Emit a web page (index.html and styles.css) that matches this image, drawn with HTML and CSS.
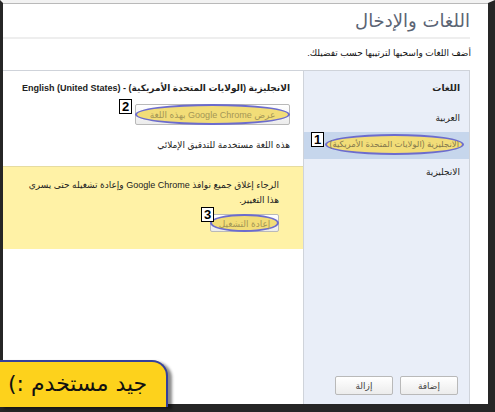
FILE: index.html
```html
<!DOCTYPE html>
<html lang="ar">
<head>
<meta charset="utf-8">
<title>اللغات والإدخال</title>
<link rel="stylesheet" href="styles.css">
</head>
<body>
<div class="frame">
  <div class="page" dir="rtl">
    <header class="head"><h1>اللغات والإدخال</h1></header>
    <p class="intro">أضف اللغات واسحبها لترتيبها حسب تفضيلك.</p>
    <div class="box">
      <aside class="langs">
        <div class="langs-title">اللغات</div>
        <ul class="lang-list">
          <li>العربية</li>
          <li class="sel"><span class="oval">الانجليزية (الولايات المتحدة الأمريكية)</span><span class="badge b1">1</span></li>
          <li>الانجليزية</li>
        </ul>
        <div class="langs-actions">
          <button class="btn">إضافة</button>
          <button class="btn">إزالة</button>
        </div>
      </aside>
      <section class="detail">
        <div class="detail-title">الانجليزية (الولايات المتحدة الأمريكية) - English (United States)</div>
        <div class="row">
          <span class="btn-wrap">
            <button class="btn btn-ui"><span class="oval oval-btn">عرض Google Chrome بهذه اللغة</span></button>
            <span class="badge b2">2</span>
          </span>
        </div>
        <p class="spell">هذه اللغة مستخدمة للتدقيق الإملائي</p>
        <div class="notice">
          <p class="notice-text">الرجاء إغلاق جميع نوافذ Google Chrome وإعادة تشغيله حتى يسري<br>هذا التغيير.</p>
          <div class="row">
            <span class="btn-wrap">
              <button class="btn btn-restart"><span class="oval oval-btn">إعادة التشغيل</span></button>
              <span class="badge b3">3</span>
            </span>
          </div>
        </div>
      </section>
    </div>
  </div>
  <div class="tab" dir="ltr"><span>(:</span> <span dir="rtl">مستخدم</span> <span dir="rtl">جيد</span></div>
</div>
</body>
</html>
```

FILE: styles.css
```css
html, body {
  margin: 0;
  padding: 0;
  background: #ffffff;
}

.frame {
  position: relative;
  width: 495px;
  height: 412px;
  box-sizing: border-box;
  border-left: 3px solid #262626;
  border-right: 7px solid #262626;
  border-bottom: 8px solid #262626;
  border-top: 3px solid #f2f2f2;
  background: #ffffff;
  font-family: "Liberation Sans", "DejaVu Sans", sans-serif;
  font-size: 10px;
  color: #222;
}

.page {
  height: 100%;
  box-sizing: border-box;
  border-top: 1px solid #b9b9b9;
  display: flex;
  flex-direction: column;
}

.head {
  margin-right: 18px;
  height: 33px;
  border-bottom: 2px solid #eeeeee;
}

.head h1 {
  margin: 0;
  font-weight: normal;
  font-size: 18px;
  line-height: 33px;
  color: #5b6474;
  font-family: "DejaVu Sans", sans-serif;
}

.intro {
  margin: 7px 17px 10px 0;
  font-size: 9px;
  line-height: 14px;
  color: #111;
}

.box {
  flex: 1;
  min-height: 0;
  margin-right: 18px;
  border-top: 1px solid #cfd3da;
  display: flex;
}

.langs {
  flex: 0 0 167px;
  box-sizing: border-box;
  background: #e9eef8;
  border-left: 1px solid #cfd3da;
  border-right: 1px solid #cfd3da;
  display: flex;
  flex-direction: column;
}

.langs-title {
  font-weight: bold;
  font-size: 9px;
  line-height: 14px;
  padding: 10px 9px 0 0;
  height: 24px;
}

.lang-list {
  list-style: none;
  margin: 0;
  padding: 0;
  flex: 1;
}

.lang-list li {
  position: relative;
  height: 27px;
  line-height: 27px;
  padding-right: 9px;
  font-size: 9px;
  white-space: nowrap;
}

.lang-list li.sel {
  background: #c6d6ec;
  padding-right: 5px;
}

.oval {
  display: inline-block;
  background: #f2dd78;
  border: 2px solid #6c6ccd;
  border-radius: 50%;
  color: #84784c;
  line-height: 15px;
  padding: 1px 4px;
  white-space: nowrap;
}

.lang-list .oval {
  vertical-align: middle;
  margin-top: -3px;
  font-size: 8.5px;
  padding: 1px 3px;
}

.badge {
  position: absolute;
  width: 11px;
  height: 13px;
  border: 1.5px solid #000;
  background: #fff;
  color: #000;
  font-family: "Liberation Sans", sans-serif;
  font-weight: bold;
  font-size: 13px;
  line-height: 13px;
  text-align: center;
}

.b1 {
  left: 7px;
  top: 0;
}

.langs-actions {
  display: flex;
  gap: 7px;
  padding: 0 11px 9px 0;
}

.btn {
  width: 58px;
  height: 19px;
  box-sizing: border-box;
  background: linear-gradient(#ffffff, #ececec);
  border: 1px solid #b9b9b9;
  border-radius: 2px;
  font-family: "Liberation Sans", "DejaVu Sans", sans-serif;
  font-size: 9px;
  color: #444;
  padding: 0;
}

.detail {
  flex: 1;
  min-width: 0;
  display: flex;
  flex-direction: column;
}

.detail-title {
  font-weight: bold;
  font-size: 9px;
  line-height: 14px;
  height: 14px;
  padding: 10px 13px 0 0;
  white-space: nowrap;
}

.row {
  display: flex;
}

.detail > .row {
  padding: 9px 13px 0 0;
}

.btn-wrap {
  position: relative;
  display: inline-block;
}

.btn-ui {
  width: 155px;
  height: 21px;
  position: relative;
}

.oval-btn {
  position: absolute;
  inset: -1px;
  padding: 0;
  line-height: 19px;
  font-size: 9px;
  color: #a49656;
  text-align: center;
}

.b2 {
  left: -16px;
  top: -5px;
}

.spell {
  margin: 12px 13px 0 0;
  font-size: 9px;
  line-height: 14px;
  height: 14px;
}

.notice {
  margin-top: 14px;
  background: #fff2a6;
  border-top: 1px solid #e6dca0;
  padding: 11px 24px 16px 0;
}

.notice-text {
  margin: 0;
  font-size: 9px;
  line-height: 15px;
  white-space: nowrap;
}

.notice .row {
  padding-top: 6px;
}

.btn-restart {
  width: 69px;
  height: 18px;
  position: relative;
}

.btn-restart .oval-btn {
  line-height: 16px;
  font-size: 9px;
}

.b3 {
  left: -9px;
  top: -7px;
}

.tab {
  position: absolute;
  left: -3px;
  top: 357px;
  width: 168px;
  height: 47px;
  box-sizing: border-box;
  background: #fdd21c;
  border-top: 2px solid #34409c;
  border-right: 2px solid #34409c;
  border-top-right-radius: 16px;
  box-shadow: 4px 2px 3px rgba(0, 0, 0, 0.45);
  font-family: "DejaVu Sans", sans-serif;
  font-size: 22px;
  line-height: 43px;
  color: #111;
  text-align: left;
  padding-left: 8px;
  white-space: nowrap;
}
```
